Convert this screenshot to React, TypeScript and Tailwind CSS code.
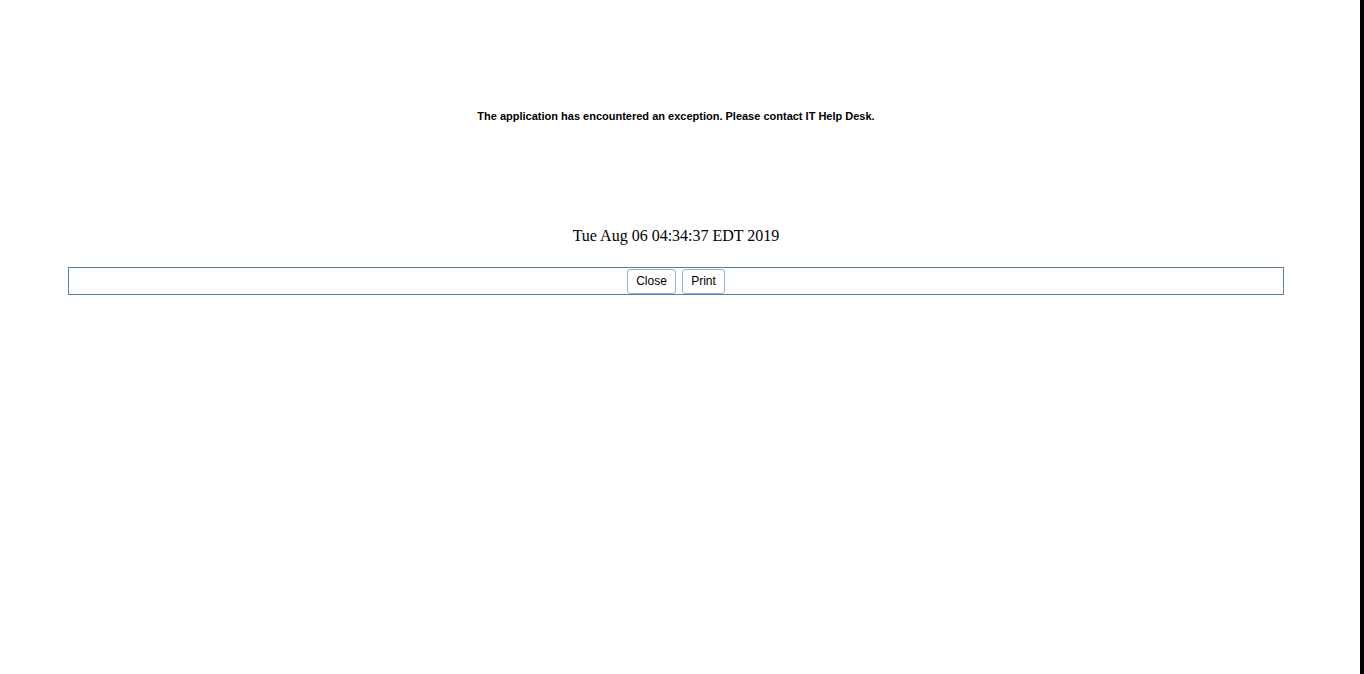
import React from "react";

export default function App() {
  return (
    <div className="flex w-[1364px] h-[674px] bg-white overflow-hidden">
      <div className="w-[1352px] shrink-0 flex flex-col items-center">
        <div className="h-[110px]" />
        <p className="text-[11px] leading-[13px] font-bold text-black" style={{ fontFamily: '"Liberation Sans", Arial, sans-serif' }}>
          The application has encountered an exception. Please contact IT Help Desk.
        </p>
        <div className="h-[103px]" />
        <p className="text-[16px] leading-[19px] text-black" style={{ fontFamily: '"Liberation Serif", "Times New Roman", serif' }}>
          Tue Aug 06 04:34:37 EDT 2019
        </p>
        <div className="h-[22px]" />
        <div className="w-[1216px] h-[28px] border border-[#5b7f9e] flex items-center justify-center gap-[6px]">
          <button className="h-[25px] w-[49px] rounded-[3px] border border-[#8fb4d6] bg-white text-[12px] text-black" style={{ fontFamily: '"Liberation Sans", Arial, sans-serif' }}>
            Close
          </button>
          <button className="h-[25px] w-[43px] rounded-[3px] border border-[#8fb4d6] bg-white text-[12px] text-black" style={{ fontFamily: '"Liberation Sans", Arial, sans-serif' }}>
            Print
          </button>
        </div>
      </div>
      <div className="w-[8px] shrink-0 bg-white" />
      <div className="w-[4px] shrink-0 bg-black" />
    </div>
  );
}
